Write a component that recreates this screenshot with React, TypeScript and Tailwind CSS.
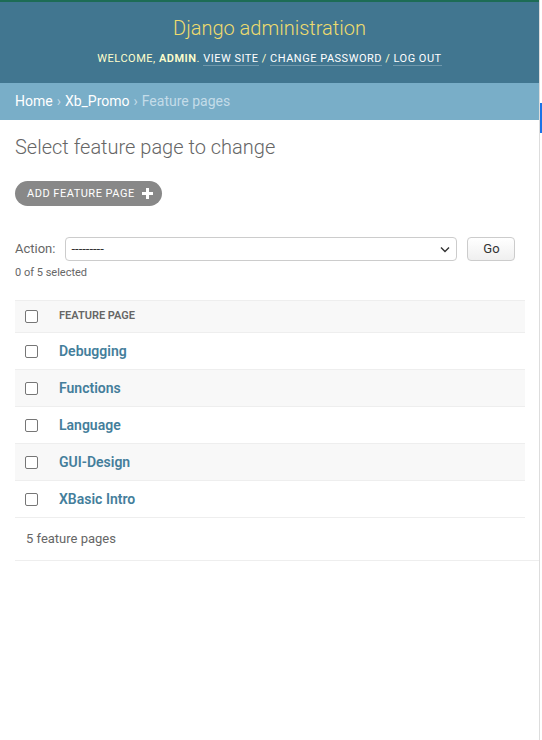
import React from 'react';

const rows = ['Debugging', 'Functions', 'Language', 'GUI-Design', 'XBasic Intro'];

const Checkbox = () => (
  <span className="block w-[13px] h-[13px] rounded-[2px] border-[1.5px] border-[#767676] bg-white" />
);

export default function App() {
  return (
    <div className="flex h-[740px] w-[542px] bg-white overflow-hidden" style={{ fontFamily: 'Roboto, "Liberation Sans", sans-serif' }}>
      <div className="w-[539px] flex flex-col">
        {/* Header */}
        <div className="h-[2px] bg-[#1d6c55]" />
        <div className="bg-[#417690] h-[81px] flex flex-col items-center pt-[13px]">
          <h1 className="text-[20px] font-light leading-[26px] text-[#efdc6e]">Django administration</h1>
          <div className="mt-[10px] text-[11px] tracking-[0.5px] uppercase text-[#ffc] leading-[16px]">
            Welcome, <strong className="font-semibold">admin</strong>.{' '}
            <a className="text-white border-b border-white/25">View site</a> /{' '}
            <a className="text-white border-b border-white/25">Change password</a> /{' '}
            <a className="text-white border-b border-white/25">Log out</a>
          </div>
        </div>

        {/* Breadcrumbs */}
        <div className="bg-[#79aec8] h-[37px] px-[15px] flex items-center text-[14px] text-[#c4dce8]">
          <a className="text-white">Home</a>
          <span className="mx-[4px]">›</span>
          <a className="text-white">Xb_Promo</a>
          <span className="mx-[4px]">›</span>
          <span>Feature pages</span>
        </div>

        {/* Content */}
        <div className="pl-[15px] pt-[15px]">
          <h2 className="text-[20px] font-light text-[#666] leading-[24px]">Select feature page to change</h2>

          <div className="mt-[22px] flex">
            <a className="h-[25px] rounded-full bg-[#888] text-white text-[11px] uppercase tracking-[0.5px] flex items-center pl-[12px] pr-[9px] pt-[2px] gap-[7px]">
              Add feature page
              <svg width="11" height="11" viewBox="0 0 11 11" className="-mt-[2px]">
                <path d="M4 0h3v4h4v3H7v4H4V7H0V4h4z" fill="#fff" />
              </svg>
            </a>
          </div>

          <div className="mt-[31px] flex items-center text-[13px] text-[#666]">
            <span>Action:</span>
            <div className="ml-[10px] w-[392px] h-[24px] border border-[#ccc] rounded-[4px] flex items-center justify-between pl-[5px] pr-[6px] bg-white">
              <span className="text-[#333] text-[13px]">---------</span>
              <svg width="10" height="7" viewBox="0 0 10 7">
                <path d="M1 1.5l4 4 4-4" stroke="#333" strokeWidth="1.4" fill="none" />
              </svg>
            </div>
            <button className="ml-[10px] w-[48px] h-[24px] border border-[#ccc] rounded-[4px] bg-gradient-to-b from-white to-[#efefef] text-[13px] text-[#333]">
              Go
            </button>
          </div>
          <div className="mt-[5px] text-[11px] text-[#666] leading-[14px]">0 of 5 selected</div>

          {/* Table */}
          <div className="mt-[20px] w-[510px] border-t border-[#eee]">
            <div className="h-[32px] bg-[#f8f8f8] border-b border-[#eee] flex items-center">
              <div className="w-[44px] pl-[10px]"><Checkbox /></div>
              <span className="text-[11px] font-semibold uppercase text-[#666]">Feature page</span>
            </div>
            {rows.map((r, i) => (
              <div
                key={r}
                className={`h-[37px] border-b border-[#eee] flex items-center ${i % 2 === 1 ? 'bg-[#f8f8f8]' : 'bg-white'}`}
              >
                <div className="w-[44px] pl-[10px]"><Checkbox /></div>
                <a className="text-[14px] font-semibold text-[#447e9b]">{r}</a>
              </div>
            ))}
          </div>
          <div className="h-[43px] border-b border-[#eee] flex items-center pl-[11px] text-[13px] text-[#666]">
            5 feature pages
          </div>
        </div>
      </div>

      {/* Right edge strip */}
      <div className="flex-1 relative border-l border-[#ddd]">
        <div className="absolute left-0 top-[103px] w-[2px] h-[30px] bg-[#1a73e8]" />
      </div>
    </div>
  );
}
